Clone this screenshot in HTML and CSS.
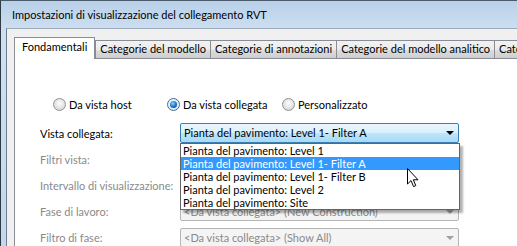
FILE: index.html
```html
<!DOCTYPE html>
<html lang="it">
  <head>
    <meta charset="utf-8">
    <link rel="stylesheet" href="styles.css">
    <title>Impostazioni di visualizzazione del collegamento RVT</title>
  </head>
  <body>
    <div class="finestra">
      <div class="titolo">Impostazioni di visualizzazione del collegamento RVT</div>
      <div class="cliente">
        <ul class="schede">
          <li class="attiva">Fondamentali</li>
          <li>Categorie del modello</li>
          <li>Categorie di annotazioni</li>
          <li>Categorie del modello analitico</li>
          <li>Categorie importate</li>
        </ul>
        <div class="pannello">
          <div class="opzioni">
            <label class="radio"><span class="cerchio"></span>Da vista host</label>
            <label class="radio"><span class="cerchio scelto"></span>Da vista collegata</label>
            <label class="radio"><span class="cerchio"></span>Personalizzato</label>
          </div>

          <div class="modulo">
            <span class="etichetta">Vista collegata:</span>
            <div class="tendina-box">
              <div class="tendina aperta">Pianta del pavimento: Level 1- Filter A<span class="freccia"></span></div>
              <ul class="elenco">
                <li>Pianta del pavimento: Level 1</li>
                <li class="sel">Pianta del pavimento: Level 1- Filter A</li>
                <li>Pianta del pavimento: Level 1- Filter B</li>
                <li>Pianta del pavimento: Level 2</li>
                <li>Pianta del pavimento: Site</li>
              </ul>
              <svg class="puntatore" width="13" height="20" viewBox="0 0 13 20">
                <path d="M0.5 0.5 L0.5 16 L4 12.6 L6.6 18.6 L8.8 17.6 L6.3 11.8 L11 11.8 Z" fill="#fff" stroke="#000" stroke-width="1" stroke-linejoin="miter"/>
              </svg>
            </div>

            <span class="etichetta spenta">Filtri vista:</span>
            <span></span>

            <span class="etichetta spenta">Intervallo di visualizzazione:</span>
            <span></span>

            <span class="etichetta spenta">Fase di lavoro:</span>
            <div class="tendina spenta">&lt;Da vista collegata&gt; (New Construction)<span class="freccia"></span></div>

            <span class="etichetta spenta">Filtro di fase:</span>
            <div class="tendina spenta">&lt;Da vista collegata&gt; (Show All)<span class="freccia"></span></div>
          </div>
        </div>
      </div>
    </div>
  </body>
</html>
```

FILE: styles.css
```css
* { box-sizing: border-box; }
body {
    margin: 0;
    width: 517px;
    height: 246px;
    overflow: hidden;
    font-family: Lato, "Open Sans", sans-serif;
    font-size: 11px;
    color: #000;
}
ul { margin: 0; padding: 0; list-style: none; }

.finestra {
    height: 100%;
    border-top: 1px solid #4a5a6a;
    border-left: 1px solid #2e3a46;
    background: linear-gradient(#b8d0e9, #cfe0f1 30px, #c3d8ee);
    display: flex;
    flex-direction: column;
}
.titolo {
    height: 27px;
    line-height: 27px;
    padding-left: 11px;
    font-size: 11px;
    color: #000;
    white-space: nowrap;
}
.cliente {
    flex: 1;
    margin-left: 5px;
    border-left: 1px solid #6f7e8e;
    border-top: 1px solid #9aaabb;
    background: #f0f0f0;
    padding: 8px 0 0 7px;
    display: flex;
    flex-direction: column;
    overflow: hidden;
}

.schede {
    display: flex;
    align-items: flex-end;
    height: 21px;
    white-space: nowrap;
    position: relative;
    z-index: 1;
}
.schede li {
    height: 18px;
    line-height: 16px;
    padding: 0 4px;
    border: 1px solid #898c95;
    border-bottom: none;
    margin-right: -1px;
    background: linear-gradient(#f2f2f2, #ebebeb 50%, #dddddd 51%, #cfcfcf);
}
.schede li.attiva {
    height: 22px;
    line-height: 17px;
    padding: 0 7px;
    background: #fff;
    margin-bottom: -1px;
    margin-right: 0;
}

.pannello {
    flex: 1;
    background: #fff;
    border: 1px solid #898c95;
    border-right: none;
    border-bottom: none;
    position: relative;
}

.opzioni {
    display: grid;
    grid-template-columns: 114px 115px auto;
    margin: 37px 0 0 38px;
    height: 16px;
    align-items: center;
}
.radio {
    display: flex;
    align-items: center;
    gap: 3px;
}
.cerchio {
    width: 13px;
    height: 13px;
    border-radius: 50%;
    border: 1px solid #929292;
    background: radial-gradient(circle at 50% 40%, #fdfdfd, #dcdcdc 70%, #cbcbcb);
    position: relative;
}
.cerchio.scelto {
    border-color: #3c6f9c;
    background: radial-gradient(circle at 50% 40%, #f7fbff, #d3e4f3);
}
.cerchio.scelto::after {
    content: "";
    position: absolute;
    left: 2px;
    top: 2px;
    width: 7px;
    height: 7px;
    border-radius: 50%;
    background: radial-gradient(circle at 40% 35%, #8fd0ff, #1a6fc0 55%, #0d3d78);
}

.modulo {
    display: grid;
    grid-template-columns: 140px 279px;
    grid-auto-rows: 20px;
    row-gap: 6px;
    margin: 11px 0 0 25px;
    align-items: center;
}
.etichetta { white-space: nowrap; }
.etichetta.spenta { color: #8a8a8a; }

.tendina-box { position: relative; height: 20px; }
.tendina {
    height: 20px;
    line-height: 18px;
    padding-left: 3px;
    border: 1px solid #3c7fb1;
    border-radius: 2px;
    background: linear-gradient(#eaf6fd, #d9f0fc 50%, #bee6fd 51%, #a7d9f5);
    position: relative;
    white-space: nowrap;
}
.tendina.spenta {
    height: 19px;
    line-height: 17px;
    border-color: #b5b5b5;
    background: #f4f4f4;
    color: #8a8a8a;
}
.freccia {
    position: absolute;
    right: 4px;
    top: 7px;
    width: 0;
    height: 0;
    border-left: 4px solid transparent;
    border-right: 4px solid transparent;
    border-top: 4px solid #000;
}
.tendina.spenta .freccia { border-top-color: #a0a0a0; top: 7px; }

.elenco {
    position: absolute;
    left: 0;
    top: 20px;
    width: 280px;
    border: 1px solid #646464;
    background: #fff;
    box-shadow: 3px 3px 2px rgba(0,0,0,.3);
    z-index: 2;
}
.elenco li {
    height: 13px;
    line-height: 13px;
    padding-left: 2px;
    white-space: nowrap;
}
.elenco li.sel { background: #3399ff; color: #fff; }

.puntatore {
    position: absolute;
    left: 227px;
    top: 45px;
    z-index: 3;
}
```
